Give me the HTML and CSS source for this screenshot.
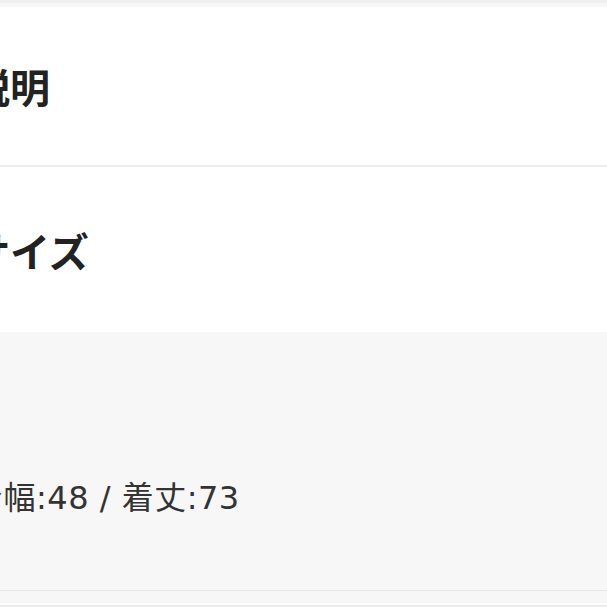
FILE: index.html
```html
<!DOCTYPE html>
<html lang="ja">
<head>
    <meta charset="UTF-8">
    <meta name="viewport" content="width=device-width, initial-scale=1.0">
    <title>説明</title>
    <link rel="stylesheet" href="styles.css">
</head>
<body>
    <div class="top-strip"></div>
    <div class="section">
        <h2 class="section-title">説明</h2>
    </div>
    <div class="divider"></div>
    <div class="section section-size">
        <h2 class="section-title">サイズ</h2>
    </div>
    <div class="detail">
        <p class="detail-text">身幅:48 / 着丈:73</p>
    </div>
    <div class="bottom-line"></div>
    <div class="bottom-band"></div>
    <div class="bottom-white"></div>
    <div class="bottom-edge"></div>
</body>
</html>
```

FILE: styles.css
```css
body {
    margin: 0;
    font-family: "Noto Sans CJK JP", sans-serif;
    background-color: #ffffff;
    overflow: hidden;
}
.top-strip {
    height: 4px;
    border-top: 3px solid #efefef;
    background-color: #f7f7f7;
}
.section {
    height: 158px;
    display: flex;
    align-items: center;
    background-color: #fff;
}
.section-size {
    height: 165px;
}
.section-title {
    margin: 0 0 0 -30px;
    font-size: 40px;
    line-height: 40px;
    font-weight: bold;
    color: #222;
    white-space: nowrap;
}
.divider {
    height: 2px;
    background-color: #ececec;
}
.detail {
    height: 258px;
    box-sizing: border-box;
    padding-top: 150px;
    background-color: #f7f7f7;
}
.detail-text {
    margin: 0 0 0 -29px;
    font-family: "DejaVu Sans", "Noto Sans CJK JP", sans-serif;
    font-size: 32px;
    line-height: 32px;
    letter-spacing: 0.5px;
    color: #333;
    white-space: nowrap;
}
.bottom-line {
    height: 1px;
    background-color: #e6e6e6;
}
.bottom-band {
    height: 12px;
    background-color: #f7f7f7;
}
.bottom-white {
    height: 2px;
    background-color: #fff;
}
.bottom-edge {
    height: 3px;
    background-color: #ececec;
}
```
